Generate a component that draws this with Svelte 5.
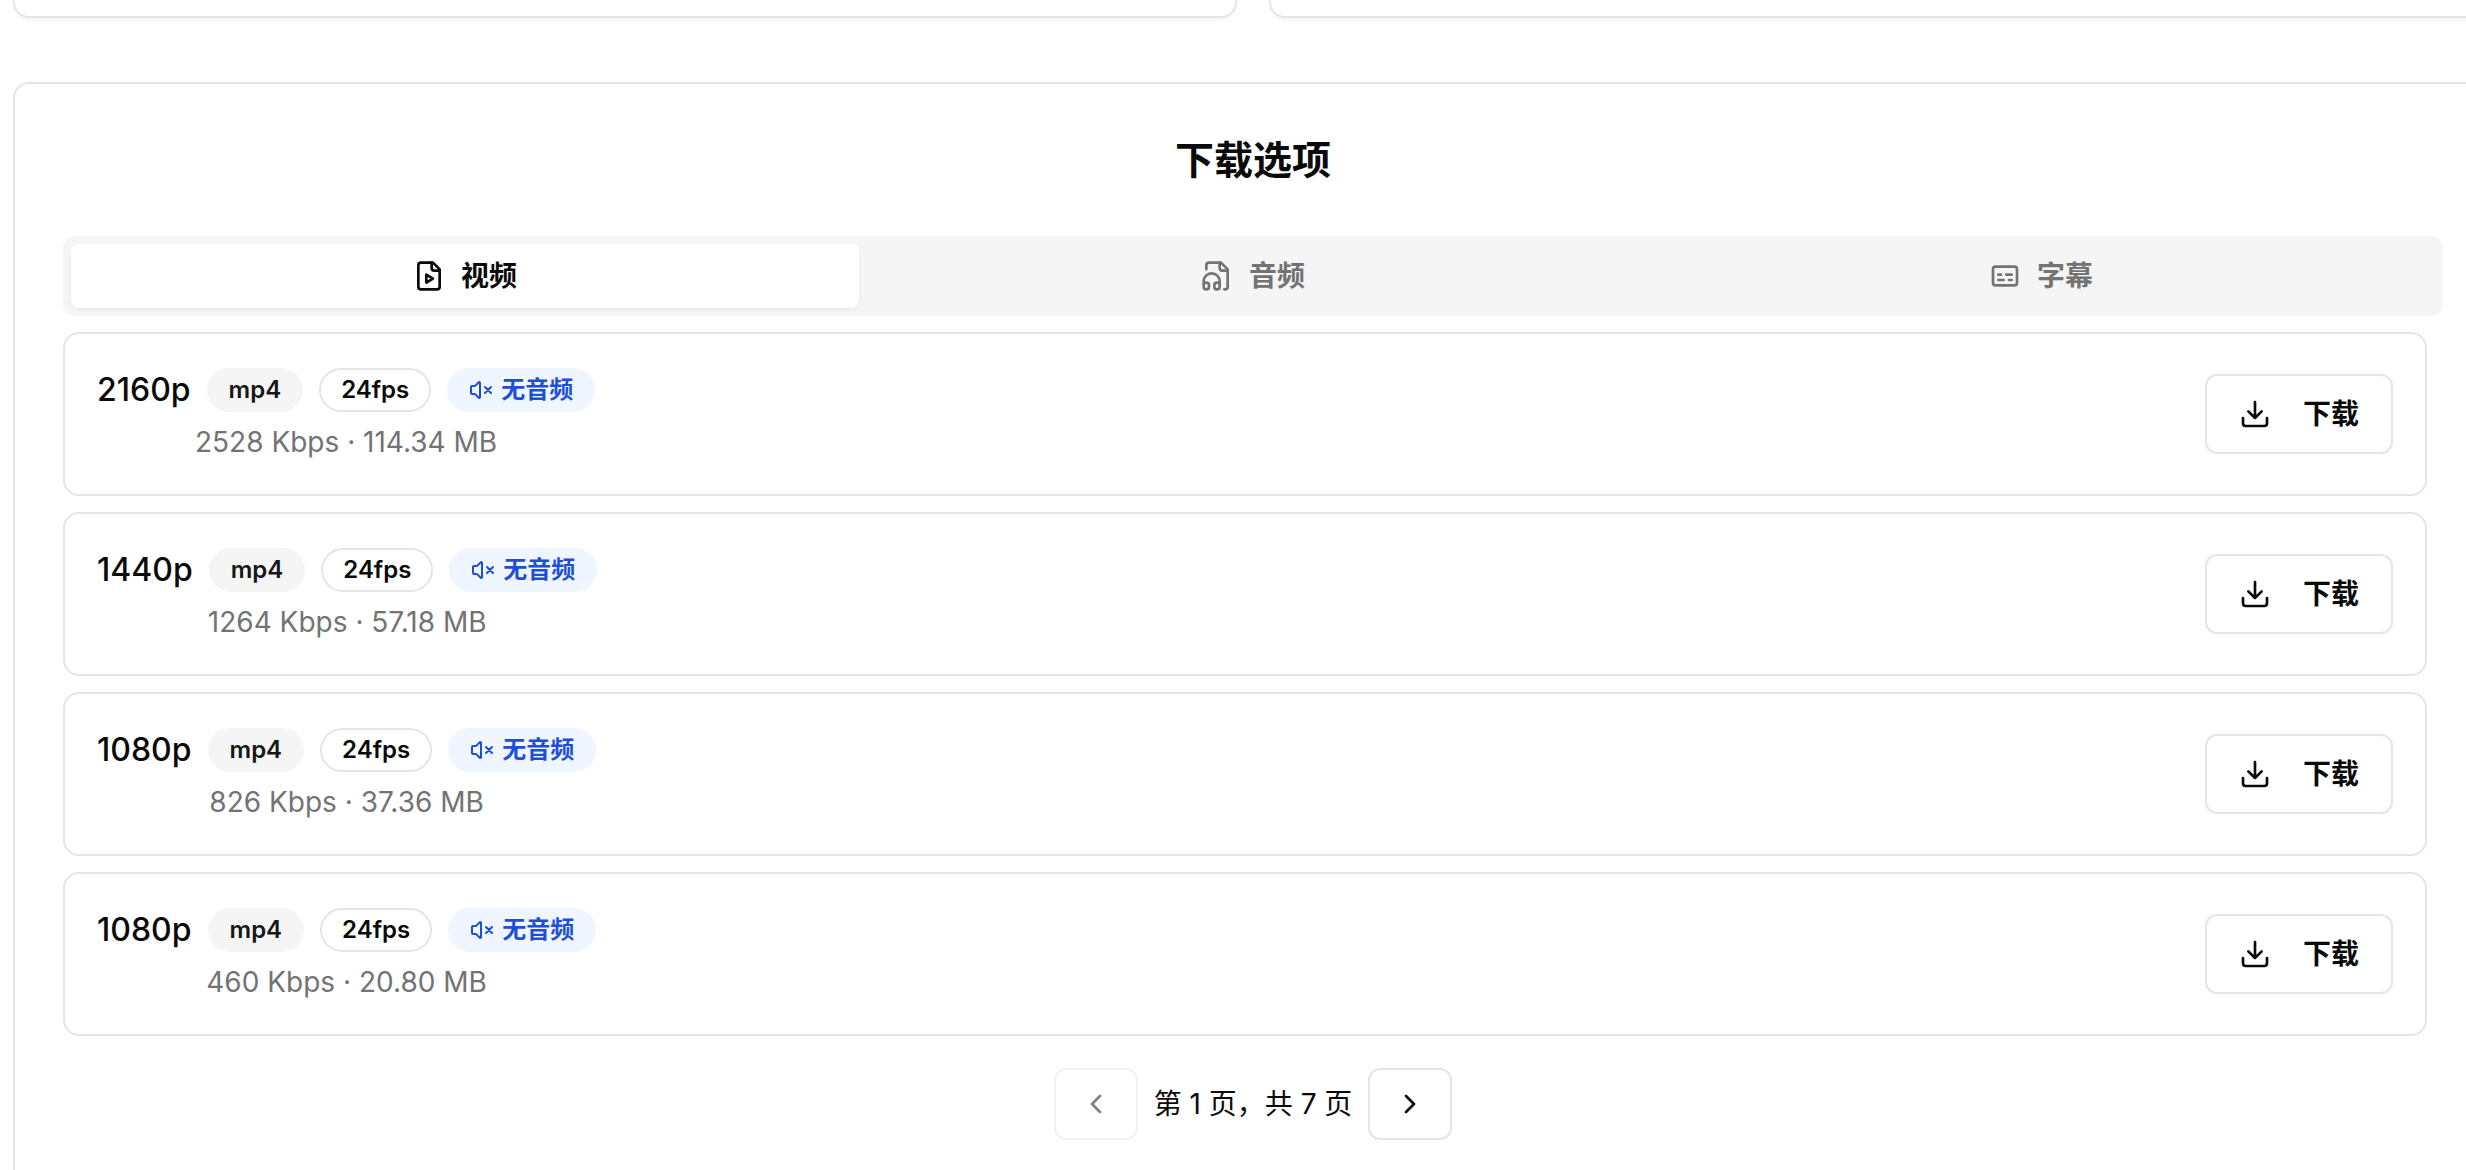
<script lang="ts">
  type Tab = { id: string; label: string };
  type Format = { quality: string; ext: string; fps: number; bitrate: number; size: string };

  const tabs: Tab[] = [
    { id: 'video', label: '视频' },
    { id: 'audio', label: '音频' },
    { id: 'subtitle', label: '字幕' },
  ];

  const formats: Format[] = [
    { quality: '2160p', ext: 'mp4', fps: 24, bitrate: 2528, size: '114.34' },
    { quality: '1440p', ext: 'mp4', fps: 24, bitrate: 1264, size: '57.18' },
    { quality: '1080p', ext: 'mp4', fps: 24, bitrate: 826, size: '37.36' },
    { quality: '1080p', ext: 'mp4', fps: 24, bitrate: 460, size: '20.80' },
  ];

  const totalPages = 7;

  let activeTab = $state('video');
  let page = $state(1);
</script>

<div class="page">
  <div class="content">
    <div class="summary">
      <div class="summary-card"></div>
      <div class="summary-card"></div>
    </div>

    <section class="panel">
      <h2>下载选项</h2>

      <div class="tabs" role="tablist">
        {#each tabs as tab (tab.id)}
          <button
            class="tab"
            class:active={activeTab === tab.id}
            role="tab"
            aria-selected={activeTab === tab.id}
            onclick={() => (activeTab = tab.id)}
          >
            <svg class="icon" viewBox="0 0 24 24" aria-hidden="true">
              {#if tab.id === 'video'}
                <path d="M15 2H6a2 2 0 0 0-2 2v16a2 2 0 0 0 2 2h12a2 2 0 0 0 2-2V7Z" />
                <path d="M14 2v4a2 2 0 0 0 2 2h4" />
                <path d="m10 11 5 3-5 3v-6Z" />
              {:else if tab.id === 'audio'}
                <path d="M17.5 22h.5a2 2 0 0 0 2-2V7l-5-5H6a2 2 0 0 0-2 2v3" />
                <path d="M14 2v4a2 2 0 0 0 2 2h4" />
                <path d="M2 19a2 2 0 1 1 4 0v1a2 2 0 1 1-4 0v-4a6 6 0 0 1 12 0v4a2 2 0 1 1-4 0v-1a2 2 0 1 1 4 0" />
              {:else}
                <rect width="18" height="14" x="3" y="5" rx="2" ry="2" />
                <path d="M7 15h4M15 15h2M7 11h2M13 11h4" />
              {/if}
            </svg>
            {tab.label}
          </button>
        {/each}
      </div>

      <ul class="formats">
        {#each formats as format}
          <li class="format">
            <div class="info">
              <div class="heading">
                <span class="quality">{format.quality}</span>
                <span class="badge secondary">{format.ext}</span>
                <span class="badge">{format.fps}fps</span>
                <span class="badge muted-audio">
                  <svg class="icon small" viewBox="0 0 24 24" aria-hidden="true">
                    <path d="M11 4.702a.705.705 0 0 0-1.203-.498L6.413 7.587A1.4 1.4 0 0 1 5.416 8H3a1 1 0 0 0-1 1v6a1 1 0 0 0 1 1h2.416a1.4 1.4 0 0 1 .997.413l3.383 3.384A.705.705 0 0 0 11 19.298z" />
                    <path d="m22 9-6 6M16 9l6 6" />
                  </svg>
                  无音频
                </span>
              </div>
              <p class="meta">{format.bitrate} Kbps · {format.size} MB</p>
            </div>

            <button class="outline download">
              <svg class="icon" viewBox="0 0 24 24" aria-hidden="true">
                <path d="M21 15v4a2 2 0 0 1-2 2H5a2 2 0 0 1-2-2v-4" />
                <path d="m7 10 5 5 5-5M12 15V3" />
              </svg>
              下载
            </button>
          </li>
        {/each}
      </ul>

      <nav class="pagination" aria-label="分页">
        <button class="outline step" aria-label="上一页" disabled={page === 1} onclick={() => page--}>
          <svg class="icon" viewBox="0 0 24 24" aria-hidden="true"><path d="m15 18-6-6 6-6" /></svg>
        </button>
        <span>第 {page} 页，共 {totalPages} 页</span>
        <button class="outline step" aria-label="下一页" disabled={page === totalPages} onclick={() => page++}>
          <svg class="icon" viewBox="0 0 24 24" aria-hidden="true"><path d="m9 18 6-6-6-6" /></svg>
        </button>
      </nav>
    </section>
  </div>
</div>

<style>
  :global(body) {
    background: #fff;
  }

  .page {
    height: 100vh;
    overflow: hidden;
    color: #0a0a0a;
    font-family: Inter, 'Noto Sans CJK SC', sans-serif;
    font-size: 28px;
    line-height: 40px;
  }

  /* the content runs a little past the right edge of the window */
  .content {
    margin: 0 -27px 0 13px;
  }

  .summary {
    display: grid;
    grid-template-columns: 1fr 1fr;
    gap: 32px;
    margin-bottom: 64px;
  }

  .summary-card {
    box-sizing: border-box;
    height: 18px;
    border: 2px solid #e5e5e5;
    border-top: none;
    border-radius: 0 0 16px 16px;
    box-shadow: 0 2px 4px rgba(0, 0, 0, 0.05);
  }

  .panel {
    padding: 48px;
    border: 2px solid #e5e5e5;
    border-radius: 16px;
  }

  h2 {
    margin: 0 0 48px;
    font-size: 39px;
    font-weight: 700;
    line-height: 56px;
    text-align: center;
  }

  button {
    font: inherit;
    font-weight: 600;
    color: inherit;
    cursor: pointer;
  }

  .icon {
    flex-shrink: 0;
    width: 32px;
    height: 32px;
    fill: none;
    stroke: currentColor;
    stroke-width: 2;
    stroke-linecap: round;
    stroke-linejoin: round;
  }

  .icon.small {
    width: 24px;
    height: 24px;
  }

  .tabs {
    display: grid;
    grid-template-columns: repeat(3, 1fr);
    padding: 8px;
    border-radius: 12px;
    background: #f5f5f5;
    color: #737373;
  }

  .tab {
    display: flex;
    align-items: center;
    justify-content: center;
    gap: 16px;
    padding: 12px 24px;
    border: none;
    border-radius: 8px;
    background: transparent;
  }

  .tab.active {
    background: #fff;
    color: #0a0a0a;
    box-shadow: 0 2px 4px rgba(0, 0, 0, 0.05);
  }

  .formats {
    display: flex;
    flex-direction: column;
    gap: 16px;
    margin: 16px 0 32px;
    padding: 0 16px 0 0;
    list-style: none;
  }

  .format {
    display: flex;
    align-items: center;
    justify-content: space-between;
    padding: 32px;
    border: 2px solid #e5e5e5;
    border-radius: 16px;
  }

  .info {
    display: flex;
    flex-direction: column;
    gap: 8px;
  }

  .heading {
    display: flex;
    align-items: center;
    gap: 16px;
  }

  .quality {
    font-size: 32px;
    font-weight: 500;
    line-height: 48px;
  }

  .badge {
    display: inline-flex;
    align-items: center;
    gap: 8px;
    padding: 4px 20px;
    border: 2px solid #e5e5e5;
    border-radius: 22px;
    font-size: 24px;
    font-weight: 600;
    line-height: 32px;
  }

  .badge.secondary {
    border-color: #f5f5f5;
    background: #f5f5f5;
    color: #171717;
  }

  .badge.muted-audio {
    border-color: #eff6ff;
    background: #eff6ff;
    color: #1d4ed8;
  }

  .meta {
    margin: 0;
    color: #737373;
    text-align: center;
  }

  .outline {
    display: flex;
    align-items: center;
    border: 2px solid #e5e5e5;
    border-radius: 12px;
    background: #fff;
  }

  .outline:hover:enabled {
    background: #f5f5f5;
  }

  .outline:disabled {
    opacity: 0.5;
    cursor: default;
  }

  .download {
    gap: 32px;
    padding: 18px 32px;
  }

  .step {
    padding: 18px 24px;
  }

  .pagination {
    display: flex;
    align-items: center;
    justify-content: center;
    gap: 16px;
  }
</style>
